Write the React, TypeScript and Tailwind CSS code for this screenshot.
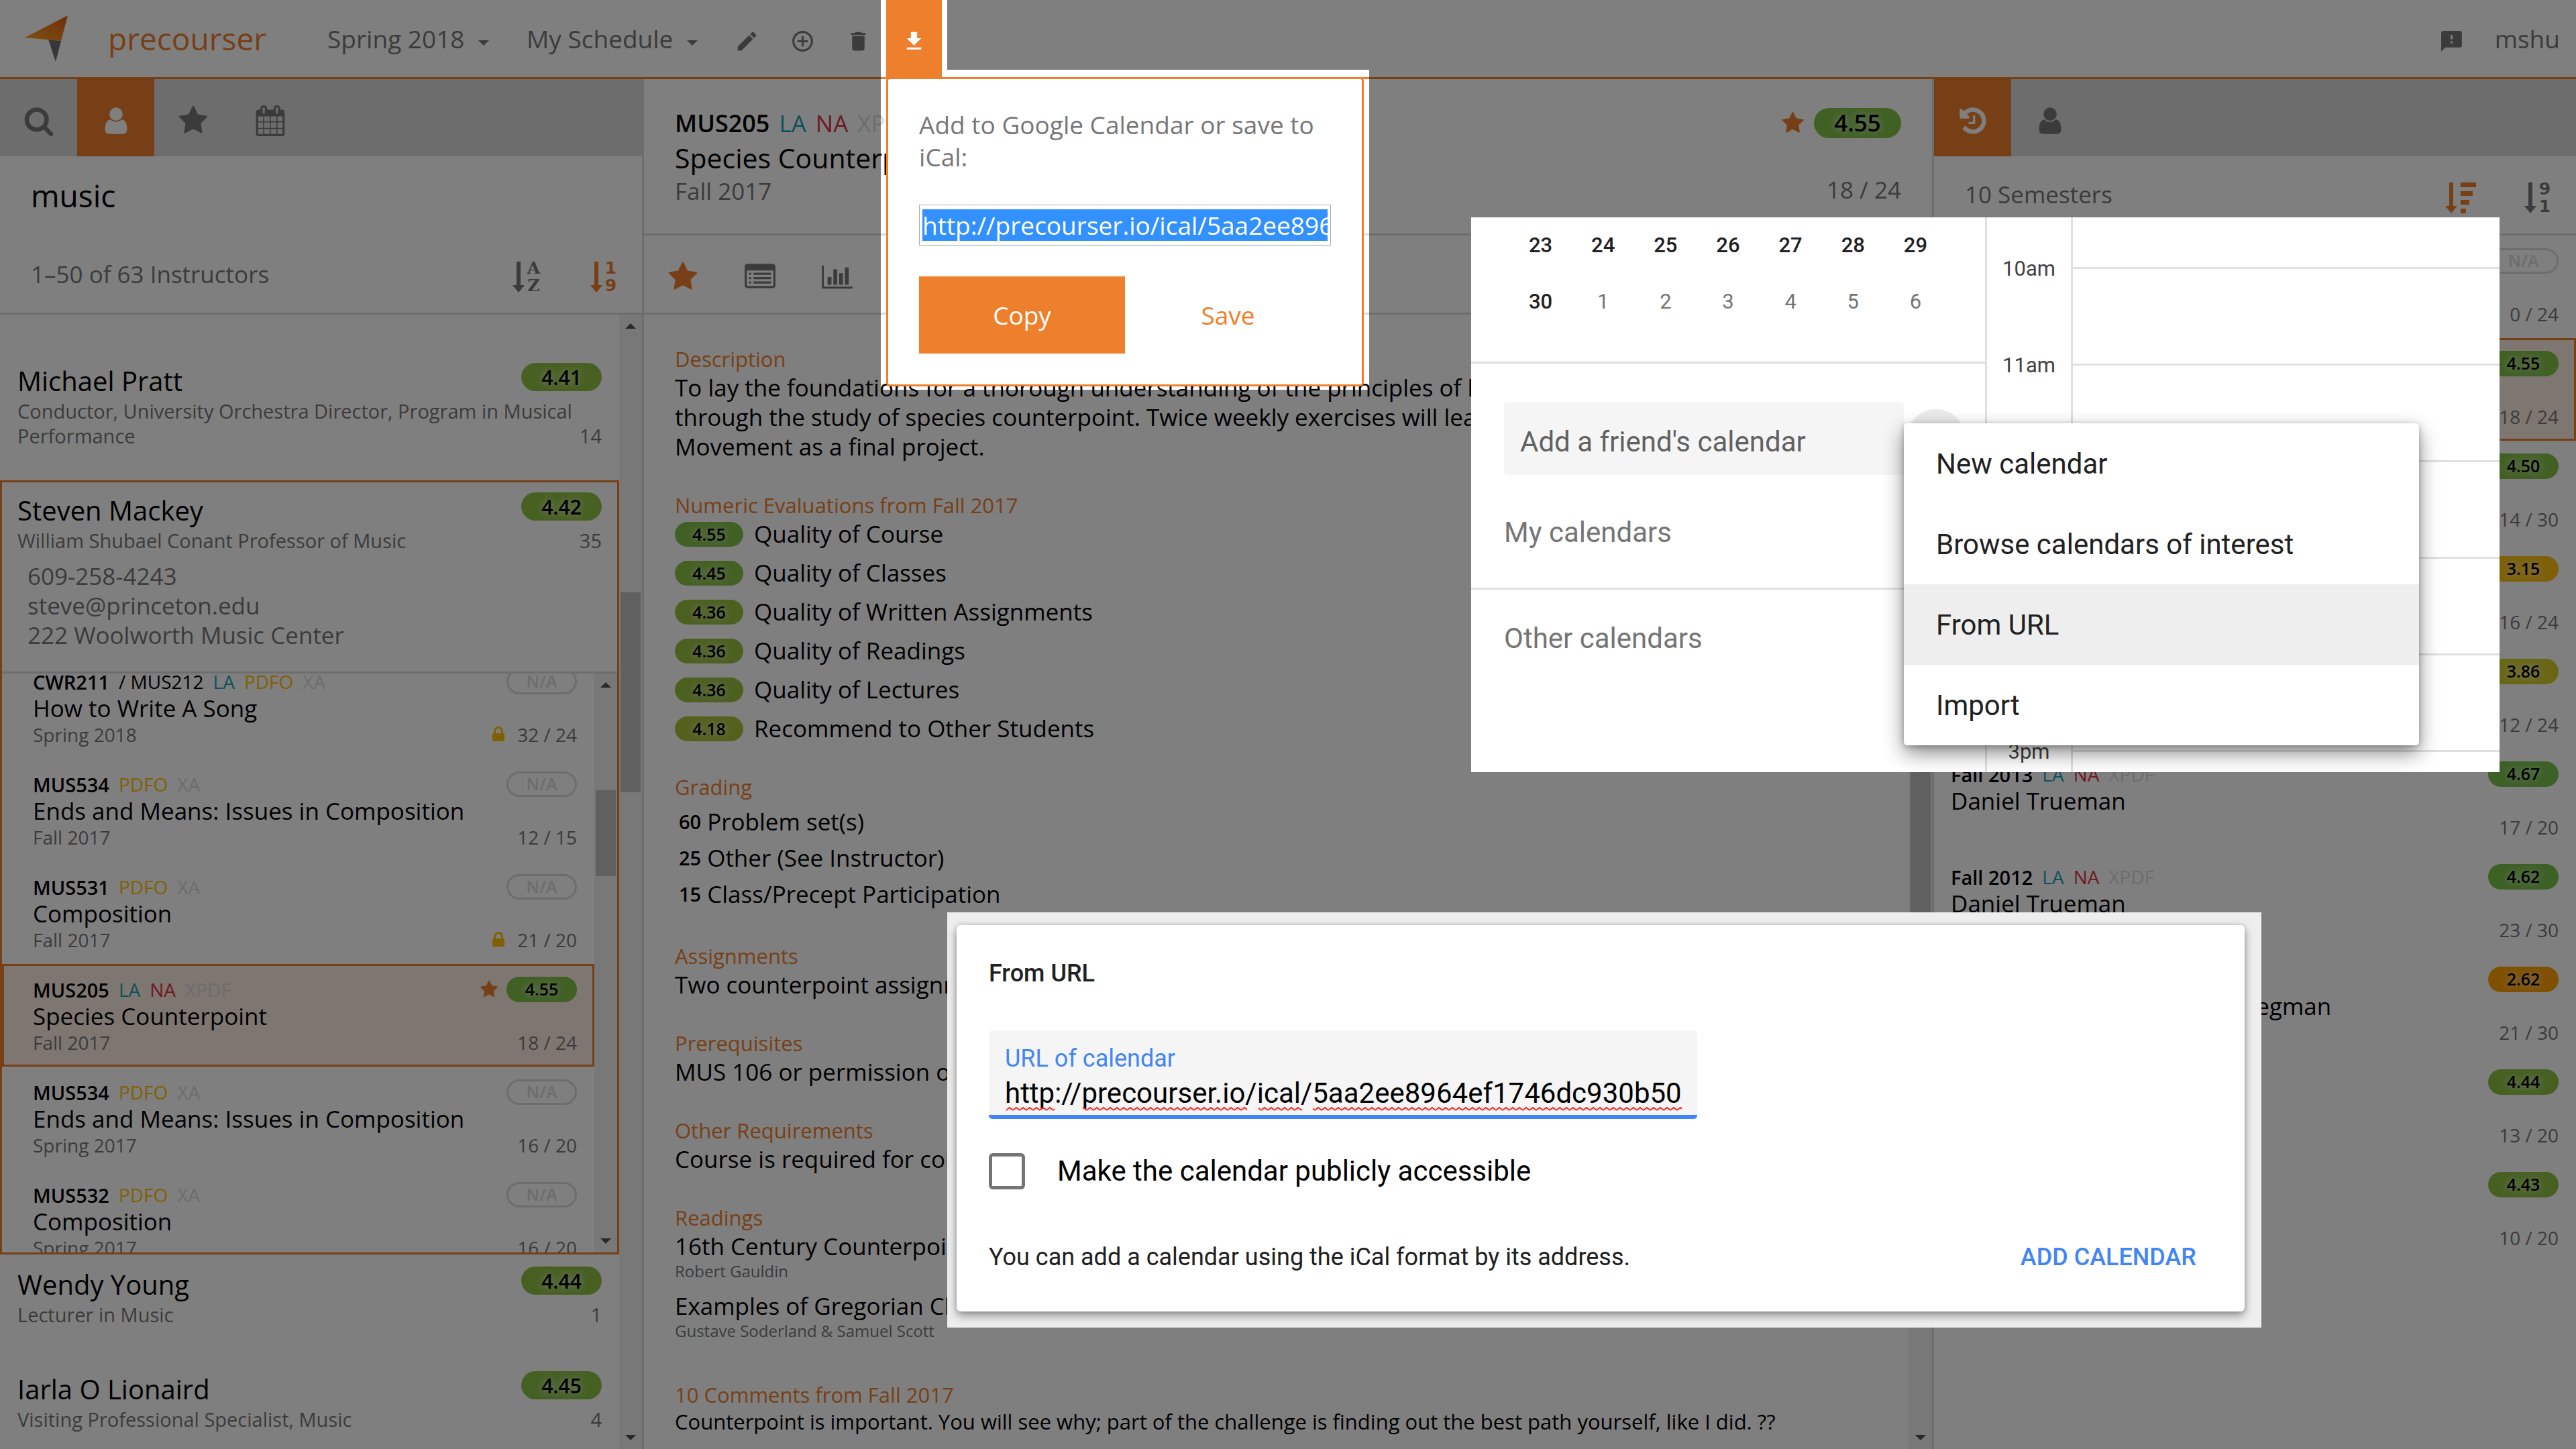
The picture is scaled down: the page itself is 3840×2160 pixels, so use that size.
import type { ReactNode } from "react";
import { MdAddCircleOutline, MdDelete, MdEdit, MdFeedback, MdFileDownload } from "react-icons/md";

const ICONS = {
  search:
    "M1216 832q0-185-131.5-316.5t-316.5-131.5-316.5 131.5-131.5 316.5 131.5 316.5 316.5 131.5 316.5-131.5 131.5-316.5zm512 832q0 52-38 90t-90 38q-54 0-90-38l-343-342q-179 124-399 124-143 0-273.5-55.5t-225-150-150-225-55.5-273.5 55.5-273.5 150-225 225-150 273.5-55.5 273.5 55.5 225 150 150 225 55.5 273.5q0 220-124 399l343 343q37 37 37 90z",
  user: "M1536 1399q0 109-62.5 187t-150.5 78h-854q-88 0-150.5-78t-62.5-187q0-85 8.5-160.5t31.5-152 58.5-131 94-89 134.5-34.5q131 128 313 128t313-128q76 0 134.5 34.5t94 89 58.5 131 31.5 152 8.5 160.5zm-256-887q0 159-112.5 271.5t-271.5 112.5-271.5-112.5-112.5-271.5 112.5-271.5 271.5-112.5 271.5 112.5 112.5 271.5z",
  star: "M1728 647q0 22-26 48l-363 354 86 500q1 7 1 20 0 21-10.5 35.5t-30.5 14.5q-19 0-40-12l-449-236-449 236q-22 12-40 12-21 0-31.5-14.5t-10.5-35.5q0-6 2-20l86-500-364-354q-25-27-25-48 0-37 56-46l502-73 225-455q19-41 49-41t49 41l225 455 502 73q56 9 56 46z",
  calendar:
    "M192 1664h288v-288h-288v288zm352 0h320v-288h-320v288zm-352-352h288v-320h-288v320zm352 0h320v-320h-320v320zm-352-384h288v-288h-288v288zm736 736h320v-288h-320v288zm-384-736h320v-288h-320v288zm768 736h288v-288h-288v288zm-384-352h320v-320h-320v320zm-352-864v-288q0-13-9.5-22.5t-22.5-9.5h-64q-13 0-22.5 9.5t-9.5 22.5v288q0 13 9.5 22.5t22.5 9.5h64q13 0 22.5-9.5t9.5-22.5zm736 864h288v-320h-288v320zm-384-384h320v-288h-320v288zm384 0h288v-288h-288v288zm32-480v-288q0-13-9.5-22.5t-22.5-9.5h-64q-13 0-22.5 9.5t-9.5 22.5v288q0 13 9.5 22.5t22.5 9.5h64q13 0 22.5-9.5t9.5-22.5zm384-64v1280q0 52-38 90t-90 38h-1408q-52 0-90-38t-38-90v-1280q0-52 38-90t90-38h128v-96q0-66 47-113t113-47h64q66 0 113 47t47 113v96h384v-96q0-66 47-113t113-47h64q66 0 113 47t47 113v96h128q52 0 90 38t38 90z",
  history:
    "M1664 896q0 156-61 298t-164 245-245 164-298 61q-172 0-327-72.5t-264-204.5q-7-10-6.5-22.5t8.5-20.5l137-138q10-9 25-9 16 2 23 12 73 95 179 147t225 52q104 0 198.5-40.5t163.5-109.5 109.5-163.5 40.5-198.5-40.5-198.5-109.5-163.5-163.5-109.5-198.5-40.5q-98 0-188 35.5t-160 101.5l137 138q31 30 14 69-17 40-59 40h-448q-26 0-45-19t-19-45v-448q0-42 40-59 39-17 69 14l130 129q107-101 244.5-156.5t284.5-55.5q156 0 298 61t245 164 164 245 61 298zm-640-288v448q0 14-9 23t-23 9h-320q-14 0-23-9t-9-23v-64q0-14 9-23t23-9h224v-352q0-14 9-23t23-9h64q14 0 23 9t9 23z",
  lock: "M640 768h512v-192q0-106-75-181t-181-75-181 75-75 181v192zm832 96v576q0 40-28 68t-68 28h-960q-40 0-68-28t-28-68v-576q0-40 28-68t68-28h32v-192q0-184 132-316t316-132 316 132 132 316v192h32q40 0 68 28t28 68z",
};

function Icon({ name, className }: { name: keyof typeof ICONS; className: string }) {
  return (
    <svg viewBox="0 0 1792 1792" className={className} fill="currentColor" aria-hidden="true">
      <path d={ICONS[name]} />
    </svg>
  );
}

function ListIcon() {
  return (
    <svg viewBox="0 0 1792 1792" className="size-[46px]" fill="currentColor" aria-hidden="true">
      <path
        fillRule="evenodd"
        d="M160 128h1472q66 0 113 47t47 113v1088q0 66-47 113t-113 47h-1472q-66 0-113-47t-47-113v-1088q0-66 47-113t113-47zM160 512q-32 0-32 32v832q0 32 32 32h1472q32 0 32-32v-832q0-32-32-32z"
      />
      <rect x="256" y="640" width="128" height="128" rx="32" />
      <rect x="256" y="896" width="128" height="128" rx="32" />
      <rect x="256" y="1152" width="128" height="128" rx="32" />
      <rect x="512" y="640" width="1024" height="128" rx="32" />
      <rect x="512" y="896" width="1024" height="128" rx="32" />
      <rect x="512" y="1152" width="1024" height="128" rx="32" />
    </svg>
  );
}

function ChartIcon() {
  return (
    <svg viewBox="0 0 2048 1792" className="h-[40px] w-[46px]" fill="currentColor" aria-hidden="true">
      <path d="M640 896v512h-256v-512h256zm384-512v1024h-256v-1024h256zm1024 1152v128h-2048v-1536h128v1408h1920zm-640-896v768h-256v-768h256zm384-384v1152h-256v-1152h256z" />
    </svg>
  );
}

function Logo() {
  return (
    <svg viewBox="0 0 64 70" className="h-[70px] w-16" aria-hidden="true">
      <defs>
        <linearGradient id="logo" x1="0.9" y1="0" x2="0.2" y2="1">
          <stop offset="0" stopColor="#df5f12" />
          <stop offset="1" stopColor="#fa9d22" />
        </linearGradient>
      </defs>
      <path d="M35 36L54 38L46 69Z" fill="#6e6e6e" />
      <path d="M64 0L0 33L54 38Z" fill="url(#logo)" />
    </svg>
  );
}

function Caret() {
  return (
    <svg viewBox="0 0 16 8" className="mt-3 h-2 w-4" fill="currentColor" aria-hidden="true">
      <path d="M0 0h16l-8 8z" />
    </svg>
  );
}

function SortArrow() {
  return (
    <svg viewBox="0 0 18 46" className="h-[46px] w-[18px]" fill="currentColor" aria-hidden="true">
      <path d="M6 0h6v35h6l-9 11l-9-11h6z" />
    </svg>
  );
}

function SortPair({ top, bottom, digits }: { top: string; bottom: string; digits?: boolean }) {
  const face = digits ? "font-['DejaVu_Sans',sans-serif]" : "font-['DejaVu_Serif',serif]";
  return (
    <span className="flex items-center gap-1">
      <SortArrow />
      <span className={`flex flex-col items-center text-[25px] leading-[26px] font-bold ${face}`}>
        <span>{top}</span>
        <span>{bottom}</span>
      </span>
    </span>
  );
}

function SortAmount() {
  return (
    <svg viewBox="0 0 46 46" className="size-[46px]" fill="currentColor" aria-hidden="true">
      <path d="M6 0h6v35h6l-9 11l-9-11h6zM23 0h23v7H23zM23 13h18v7H23zM23 26h13v7H23zM23 39h8v7H23z" />
    </svg>
  );
}

function Cell({ label, active, lit, children }: { label: string; active?: boolean; lit?: boolean; children: ReactNode }) {
  const tone = active ? "bg-[#ee7f2d] text-white" : lit ? "text-[#ee7f2d]" : "text-[#777]";
  return (
    <button type="button" aria-label={label} className={`flex h-[115px] w-[115px] shrink-0 items-center justify-center pt-2 ${tone}`}>
      {children}
    </button>
  );
}

function ScrollBar({ offset, thumb }: { offset: number; thumb: number }) {
  return (
    <div aria-hidden="true" className="flex w-[34px] shrink-0 flex-col items-center bg-[#f1f1f1] py-[13px] text-[#505050]">
      <svg viewBox="0 0 16 8" className="h-2 w-4 shrink-0" fill="currentColor">
        <path d="M8 0l8 8H0z" />
      </svg>
      <div className="flex w-[30px] flex-1 flex-col">
        <div style={{ height: offset }} />
        <div className="bg-[#c1c1c1]" style={{ height: thumb }} />
      </div>
      <svg viewBox="0 0 16 8" className="h-2 w-4 shrink-0" fill="currentColor">
        <path d="M0 0h16l-8 8z" />
      </svg>
    </div>
  );
}

const SCORE_COLORS: Record<string, string> = {
  "4.67": "bg-[#78c04c]",
  "4.62": "bg-[#7ac04a]",
  "4.55": "bg-[#80c048]",
  "4.50": "bg-[#84c048]",
  "4.45": "bg-[#8ac046]",
  "4.44": "bg-[#8ec044]",
  "4.43": "bg-[#8ec044]",
  "4.42": "bg-[#90c044]",
  "4.41": "bg-[#90c044]",
  "4.36": "bg-[#98c040]",
  "4.18": "bg-[#a8c038]",
  "3.86": "bg-[#d2ce2c]",
  "3.15": "bg-[#fcc010]",
  "2.62": "bg-[#ffa000]",
};

const GLOW = "[text-shadow:0_0_12px_white]";

function Score({ value, size }: { value: string; size: string }) {
  if (value === "N/A") {
    return (
      <span className={`flex items-center justify-center rounded-full border-[3px] border-[#dadada] font-semibold text-[#dadada] ${size}`}>
        N/A
      </span>
    );
  }
  return (
    <span className={`flex items-center justify-center rounded-full font-semibold ${GLOW} ${SCORE_COLORS[value]} ${size}`}>
      {value}
    </span>
  );
}

const TAG_COLORS: Record<string, string> = {
  LA: "text-[#17a2b8]",
  NA: "text-[#dc3545]",
  PDFO: "text-[#ffc107]",
  XA: "text-[#dadada]",
  XPDF: "text-[#dadada]",
};

function Tags({ tags }: { tags: string[] }) {
  return (
    <>
      {tags.map((t) => (
        <span key={t} className={TAG_COLORS[t]}>
          {t}
        </span>
      ))}
    </>
  );
}

type Course = {
  code: string;
  alias?: string;
  tags: string[];
  title: string;
  term?: string;
  score: string;
  seats: string;
  locked?: boolean;
  starred?: boolean;
  selected?: boolean;
};

const INSTRUCTOR_COURSES: Course[] = [
  { code: "CWR211", alias: "/ MUS212", tags: ["LA", "PDFO", "XA"], title: "How to Write A Song", term: "Spring 2018", score: "N/A", seats: "32 / 24", locked: true },
  { code: "MUS534", tags: ["PDFO", "XA"], title: "Ends and Means: Issues in Composition", term: "Fall 2017", score: "N/A", seats: "12 / 15" },
  { code: "MUS531", tags: ["PDFO", "XA"], title: "Composition", term: "Fall 2017", score: "N/A", seats: "21 / 20", locked: true },
  { code: "MUS205", tags: ["LA", "NA", "XPDF"], title: "Species Counterpoint", term: "Fall 2017", score: "4.55", seats: "18 / 24", starred: true, selected: true },
  { code: "MUS534", tags: ["PDFO", "XA"], title: "Ends and Means: Issues in Composition", term: "Spring 2017", score: "N/A", seats: "16 / 20" },
  { code: "MUS532", tags: ["PDFO", "XA"], title: "Composition", term: "Spring 2017", score: "N/A", seats: "16 / 20" },
];

const XT = ["LA", "NA", "XPDF"];
const SEMESTERS: Course[] = [
  { code: "Spring 2018", tags: XT, title: "Dmitri Tymoczko", score: "N/A", seats: "0 / 24" },
  { code: "Fall 2017", tags: XT, title: "Steven Mackey", score: "4.55", seats: "18 / 24", selected: true },
  { code: "Fall 2016", tags: XT, title: "Dmitri Tymoczko", score: "4.50", seats: "14 / 30" },
  { code: "Fall 2015", tags: XT, title: "Daniel Trueman", score: "3.15", seats: "16 / 24" },
  { code: "Fall 2014", tags: XT, title: "Daniel Trueman", score: "3.86", seats: "12 / 24" },
  { code: "Fall 2013", tags: XT, title: "Daniel Trueman", score: "4.67", seats: "17 / 20" },
  { code: "Fall 2012", tags: XT, title: "Daniel Trueman", score: "4.62", seats: "23 / 30" },
  { code: "Fall 2011", tags: XT, title: "Daniel Trueman, Andrew Wiegman", score: "2.62", seats: "21 / 30" },
  { code: "Fall 2010", tags: XT, title: "Paul Lansky", score: "4.44", seats: "13 / 20" },
  { code: "Fall 2009", tags: XT, title: "Paul Lansky", score: "4.43", seats: "10 / 20" },
];

function CourseRow({ course, wide }: { course: Course; wide?: boolean }) {
  const frame = course.selected ? "border-[#ee7f2d] bg-[#fcece2]" : "border-transparent";
  return (
    <li className={`flex h-[153px] shrink-0 justify-between border-[3px] pt-4 pr-[23px] pb-[14px] ${wide ? "pl-[22px]" : "pl-[43px]"} ${frame}`}>
      <div className="min-w-0 whitespace-nowrap">
        <div className="flex gap-[14px] text-[28px] leading-[39px]">
          <span className="text-[29px] font-semibold">{course.code}</span>
          {course.alias && <span>{course.alias}</span>}
          <Tags tags={course.tags} />
        </div>
        <div className="text-[35px] leading-[40px]">{course.title}</div>
        {course.term && <div className="text-[28px] leading-[38px] text-[#777]">{course.term}</div>}
      </div>
      <div className="flex flex-col items-end justify-between">
        <div className="flex items-center gap-3">
          {course.starred && <Icon name="star" className="size-7 text-[#ee7f2d]" />}
          <Score value={course.score} size="h-[38px] w-[105px] text-[25px]" />
        </div>
        <div className="flex items-center gap-[14px] text-[28px] leading-[38px] text-[#777]">
          {course.locked && <Icon name="lock" className="size-7 text-[#ffc107]" />}
          {course.seats}
        </div>
      </div>
    </li>
  );
}

function InstructorHead({ name, role, score, count }: { name: string; role: string; score: string; count: number }) {
  return (
    <div className="px-[23px] pt-[13px]">
      <div className="flex justify-between pt-[2px]">
        <div className="text-[40px] leading-[53px]">{name}</div>
        <Score value={score} size="h-[42px] w-[120px] text-[30px]" />
      </div>
      <div className="flex items-end justify-between text-[29px] leading-[37px] text-[#777]">
        <div className="min-w-0">{role}</div>
        <div>{count}</div>
      </div>
    </div>
  );
}

function InstructorItem(props: { name: string; role: string; score: string; count: number }) {
  return (
    <li className="shrink-0 border-[3px] border-transparent pb-[45px]">
      <InstructorHead {...props} />
    </li>
  );
}

function LeftPane() {
  return (
    <aside className="flex min-h-0 min-w-0 flex-col border-r-[3px] border-[#dadada]">
      <nav className="flex bg-[#dadada]">
        <Cell label="Search courses">
          <Icon name="search" className="size-[46px]" />
        </Cell>
        <Cell label="Instructors" active>
          <Icon name="user" className="size-[46px]" />
        </Cell>
        <Cell label="Starred">
          <Icon name="star" className="size-[46px]" />
        </Cell>
        <Cell label="Schedule">
          <Icon name="calendar" className="size-[46px]" />
        </Cell>
      </nav>
      <input aria-label="Search instructors" defaultValue="music" className="h-[115px] w-full px-[46px] text-[46px] outline-none" />
      <div className="flex h-[121px] shrink-0 items-center justify-between border-b-[3px] border-[#dadada] pt-1 pl-[46px] text-[35px] text-[#777]">
        <span>1–50 of 63 Instructors</span>
        <div className="flex">
          <Cell label="Sort by name">
            <SortPair top="A" bottom="Z" />
          </Cell>
          <Cell label="Sort by rating" lit>
            <SortPair top="1" bottom="9" digits />
          </Cell>
        </div>
      </div>
      <div className="flex min-h-0 flex-1">
        <ul className="flex min-w-0 flex-1 flex-col overflow-hidden pt-[54px]">
          <InstructorItem
            name="Michael Pratt"
            role="Conductor, University Orchestra Director, Program in Musical Performance"
            score="4.41"
            count={14}
          />
          <li className="shrink-0 border-[3px] border-[#ee7f2d]">
            <InstructorHead name="Steven Mackey" role="William Shubael Conant Professor of Music" score="4.42" count={35} />
            <address className="border-b-[3px] border-[#dadada] pt-[13px] pb-8 pl-[38px] text-[35px] leading-[44px] text-[#777] not-italic">
              609-258-4243
              <br />
              steve@princeton.edu
              <br />
              222 Woolworth Music Center
            </address>
            <div className="flex h-[863px] overflow-hidden">
              <ul className="-mt-[26px] min-w-0 flex-1">
                {INSTRUCTOR_COURSES.map((c, i) => (
                  <CourseRow key={i} course={c} />
                ))}
              </ul>
              <ScrollBar offset={153} thumb={128} />
            </div>
          </li>
          <InstructorItem name="Wendy Young" role="Lecturer in Music" score="4.44" count={1} />
          <InstructorItem name="Iarla O Lionaird" role="Visiting Professional Specialist, Music" score="4.45" count={4} />
        </ul>
        <ScrollBar offset={393} thumb={298} />
      </div>
    </aside>
  );
}

const EVALUATIONS: [string, string][] = [
  ["4.55", "Quality of Course"],
  ["4.45", "Quality of Classes"],
  ["4.36", "Quality of Written Assignments"],
  ["4.36", "Quality of Readings"],
  ["4.36", "Quality of Lectures"],
  ["4.18", "Recommend to Other Students"],
];

const GRADING: [number, string][] = [
  [60, "Problem set(s)"],
  [25, "Other (See Instructor)"],
  [15, "Class/Precept Participation"],
];

const READINGS: [string, string][] = [
  ["16th Century Counterpoint", "Robert Gauldin"],
  ["Examples of Gregorian Chant", "Gustave Soderland & Samuel Scott"],
];

function Section({ title, children }: { title: string; children: ReactNode }) {
  return (
    <section>
      <h2 className="text-[31px] leading-[42px] text-[#ee7f2d]">{title}</h2>
      {children}
    </section>
  );
}

function MiddlePane() {
  return (
    <main className="flex min-h-0 min-w-0 flex-col">
      <header className="flex h-[233px] shrink-0 items-center justify-between border-b-[3px] border-[#dadada] px-[46px]">
        <div>
          <div className="flex gap-[14px] text-[35px] leading-[49px]">
            <span className="text-[36px] font-semibold">MUS205</span>
            <Tags tags={XT} />
          </div>
          <h1 className="text-[41px] leading-[54px]">Species Counterpoint</h1>
          <div className="text-[35px] leading-[46px] text-[#777]">Fall 2017</div>
        </div>
        <div className="flex flex-col items-end gap-[54px]">
          <div className="flex items-center gap-[14px]">
            <Icon name="star" className="size-[35px] text-[#ee7f2d]" />
            <Score value="4.55" size="h-[45px] w-[130px] text-[35px]" />
          </div>
          <div className="text-[35px] leading-[46px] text-[#777]">18 / 24</div>
        </div>
      </header>
      <nav className="flex border-b-[3px] border-[#dadada]">
        <Cell label="Star this course" lit>
          <Icon name="star" className="size-[46px]" />
        </Cell>
        <Cell label="Details">
          <ListIcon />
        </Cell>
        <Cell label="Statistics">
          <ChartIcon />
        </Cell>
      </nav>
      <div className="flex min-h-0 flex-1">
        <div className="flex min-w-0 flex-1 flex-col gap-11 overflow-hidden pt-[45px] pl-[46px] text-[35px] leading-[44px] whitespace-nowrap">
          <Section title="Description">
            <p>
              To lay the foundations for a thorough understanding of the principles of linear and vertical construction
              <br />
              through the study of species counterpoint. Twice weekly exercises will lead to the writing of a Mass
              <br />
              Movement as a final project.
            </p>
          </Section>
          <Section title="Numeric Evaluations from Fall 2017">
            <ul className="flex flex-col gap-[14px]">
              {EVALUATIONS.map(([score, label]) => (
                <li key={label} className="flex items-center gap-4">
                  <Score value={score} size="h-[37px] w-[102px] text-[25px]" />
                  {label}
                </li>
              ))}
            </ul>
          </Section>
          <Section title="Grading">
            <ul className="pt-1 pl-[6px]">
              {GRADING.map(([pct, label]) => (
                <li key={label} className="flex items-center gap-[9px] leading-[54px]">
                  <span className="text-[29px] font-semibold">{pct}</span>
                  {label}
                </li>
              ))}
            </ul>
          </Section>
          <Section title="Assignments">
            <p>Two counterpoint assignments weekly</p>
          </Section>
          <Section title="Prerequisites">
            <p>MUS 106 or permission of instructor</p>
          </Section>
          <Section title="Other Requirements">
            <p>Course is required for concentrators</p>
          </Section>
          <Section title="Readings">
            {READINGS.map(([title, author]) => (
              <div key={title} className="pb-[15px]">
                <p>{title}</p>
                <p className="text-[24px] leading-[30px] text-[#777]">{author}</p>
              </div>
            ))}
          </Section>
          <Section title="10 Comments from Fall 2017">
            <p className="text-[31px] leading-[38px]">
              Counterpoint is important. You will see why; part of the challenge is finding out the best path yourself, like I did. ??
            </p>
          </Section>
        </div>
        <ScrollBar offset={300} thumb={900} />
      </div>
    </main>
  );
}

function RightPane() {
  return (
    <aside className="flex min-h-0 min-w-0 flex-col border-l-[3px] border-[#dadada]">
      <nav className="flex bg-[#dadada]">
        <Cell label="History" active>
          <Icon name="history" className="size-[46px]" />
        </Cell>
        <Cell label="Instructors">
          <Icon name="user" className="size-[46px]" />
        </Cell>
      </nav>
      <div className="flex h-[118px] shrink-0 items-center justify-between border-b-[3px] border-[#dadada] pl-[46px] text-[35px] text-[#777]">
        <span>10 Semesters</span>
        <div className="flex">
          <Cell label="Sort by term" lit>
            <SortAmount />
          </Cell>
          <Cell label="Sort by rating">
            <SortPair top="9" bottom="1" digits />
          </Cell>
        </div>
      </div>
      <ul className="min-h-0 flex-1 overflow-hidden">
        {SEMESTERS.map((c) => (
          <CourseRow key={c.code} course={c} wide />
        ))}
      </ul>
    </aside>
  );
}

function ExportPopup() {
  return (
    <div className="absolute top-[115px] left-0 z-20 w-[712px] rounded-[5px] border-[3px] border-[#ee7f2d] bg-white px-[46px] pt-11 pb-[46px] text-[37px] leading-[48px]">
      <label htmlFor="ical" className="block text-[#777]">
        Add to Google Calendar or save to iCal:
      </label>
      <input
        id="ical"
        readOnly
        defaultValue="http://precourser.io/ical/5aa2ee8964ef1746dc930b50"
        className="mt-[47px] block h-[61px] w-full border border-[#a9a9a9] bg-[#3390ff] bg-clip-content px-1 py-[6px] text-white outline-none"
      />
      <div className="mt-[46px] flex">
        <button type="button" className="h-[115px] flex-1 bg-[#ee7f2d] text-white">
          Copy
        </button>
        <button type="button" className="h-[115px] flex-1 text-[#ee7f2d]">
          Save
        </button>
      </div>
    </div>
  );
}

function TopBar() {
  return (
    <header className="flex h-[118px] shrink-0 items-center border-b-[3px] border-[#ee7f2d] pr-6 pl-[37px] text-[37px] text-[#777]">
      <Logo />
      <a href="#" className="ml-[60px] text-[46px] text-[#ee7f2d]">
        precourser
      </a>
      <label className="ml-[91px] flex items-center gap-5">
        <select aria-label="Term" className="appearance-none">
          <option>Spring 2018</option>
        </select>
        <Caret />
      </label>
      <label className="ml-14 flex items-center gap-5">
        <select aria-label="Schedule" className="appearance-none">
          <option>My Schedule</option>
        </select>
        <Caret />
      </label>
      <div className="ml-8 flex h-[115px] pt-2">
        <button type="button" aria-label="Rename schedule" className="flex w-[83px] items-center justify-center">
          <MdEdit />
        </button>
        <button type="button" aria-label="New schedule" className="flex w-[83px] items-center justify-center">
          <MdAddCircleOutline />
        </button>
        <button type="button" aria-label="Delete schedule" className="flex w-[83px] items-center justify-center">
          <MdDelete />
        </button>
      </div>
      <div className="relative">
        <button type="button" aria-label="Export schedule" className="flex h-[115px] w-[83px] items-center justify-center bg-[#ee7f2d] pt-2 text-white">
          <MdFileDownload />
        </button>
        <ExportPopup />
      </div>
      <button type="button" aria-label="Send feedback" className="mt-2 ml-auto">
        <MdFeedback />
      </button>
      <a href="#" className="ml-[46px]">
        mshu
      </a>
    </header>
  );
}

const DAYS = ["23", "24", "25", "26", "27", "28", "29", "30", "1", "2", "3", "4", "5", "6"];
const HOURS = ["10am", "11am", "12pm", "1pm", "2pm", "3pm"];
const MENU = ["New calendar", "Browse calendars of interest", "From URL", "Import"];

function CalendarPanel() {
  return (
    <div className="absolute top-[324px] left-[2193px] z-20 flex h-[827px] w-[1533px] overflow-hidden bg-white font-[Roboto,sans-serif]">
      <div className="flex w-[766px] flex-col text-[42px] leading-[50px] text-[#757575]">
        <div className="grid h-[215px] grid-cols-7 content-start px-[57px] text-center text-[31px] leading-[84px] text-[#212121]">
          {DAYS.map((d, i) => (
            <span key={d} className={i > 7 ? "text-[#757575]" : "font-medium"}>
              {d}
            </span>
          ))}
        </div>
        <div className="h-[340px] border-t-[3px] border-b-[3px] border-[#e0e0e0] pt-[58px] pl-[49px]">
          <div className="flex items-center">
            <input
              aria-label="Add a friend's calendar"
              placeholder="Add a friend's calendar"
              className="h-[108px] w-[596px] rounded-[5px] bg-[#f5f5f5] px-6 pt-2 placeholder:text-[#616161]"
            />
            <span className="ml-1 size-[88px] rounded-full bg-[#ebebeb]" />
          </div>
          <h3 className="mt-[61px]">My calendars</h3>
        </div>
        <h3 className="pt-[48px] pl-[49px]">Other calendars</h3>
      </div>
      <div className="w-[131px] border-r-[3px] border-l-[3px] border-[#e0e0e0] pt-[5px] text-center text-[31px] leading-[144px] text-[#424242]">
        {HOURS.map((h) => (
          <div key={h}>{h}</div>
        ))}
      </div>
      <div className="flex-1">
        <div className="h-[77px] border-b-[3px] border-[#e0e0e0]" />
        {HOURS.slice(1).map((h) => (
          <div key={h} className="h-36 border-b-[3px] border-[#e0e0e0]" />
        ))}
      </div>
      <ul className="absolute top-[307px] left-[645px] w-[768px] overflow-visible rounded-[5px] bg-white text-[42px] text-[#212121] shadow-[0_12px_30px_rgba(0,0,0,0.45),0_2px_8px_rgba(0,0,0,0.25)]">
        {MENU.map((m) => (
          <li key={m}>
            <button type="button" className={`h-[120px] w-full px-12 text-left ${m === "From URL" ? "bg-[#eeeeee]" : ""}`}>
              {m}
            </button>
          </li>
        ))}
      </ul>
    </div>
  );
}

const SQUIGGLES: [number, number][] = [
  [0, 72],
  [114, 245],
  [376, 65],
  [457, 550],
];

function FromUrlDialog() {
  return (
    <div className="absolute top-[1360px] left-[1412px] z-20 w-[1959px] bg-[#eeeeee] px-[14px] pt-[19px] pb-6 font-[Roboto,sans-serif]">
      <form className="mr-[11px] rounded-[6px] bg-white px-12 pt-12 pb-[57px] shadow-[0_6px_14px_rgba(0,0,0,0.4),0_0_6px_rgba(0,0,0,0.15)]">
        <h2 className="text-[36px] leading-[48px] font-medium text-[#212121]">From URL</h2>
        <div className="relative mt-[61px] h-[132px] w-[1056px] rounded-[5px] border-b-[6px] border-[#4285f4] bg-[#f5f5f5] px-6 pt-[21px]">
          <label htmlFor="url" className="block text-[36px] leading-[42px] text-[#4285f4]">
            URL of calendar
          </label>
          <input
            id="url"
            defaultValue="http://precourser.io/ical/5aa2ee8964ef1746dc930b50"
            className="mt-[5px] block h-[50px] w-full bg-transparent text-[42px] outline-none"
          />
          <svg className="absolute bottom-[5px] left-[26px] h-2 w-[1008px]" aria-hidden="true">
            <defs>
              <pattern id="wave" width="10" height="8" patternUnits="userSpaceOnUse">
                <path d="M0 6L5 2L10 6" fill="none" stroke="#f22" strokeWidth="2" />
              </pattern>
            </defs>
            {SQUIGGLES.map(([x, w]) => (
              <rect key={x} x={x} width={w} height="8" fill="url(#wave)" />
            ))}
          </svg>
        </div>
        <label className="mt-[51px] flex items-center gap-12 text-[42px] leading-[54px]">
          <input type="checkbox" className="size-[54px] appearance-none rounded-[6px] border-[5px] border-[#757575]" />
          Make the calendar publicly accessible
        </label>
        <div className="mt-[77px] flex items-center justify-between pr-6 text-[36px] leading-[48px]">
          <p className="text-[#212121]">You can add a calendar using the iCal format by its address.</p>
          <button type="button" className="font-medium text-[#4285f4]">
            ADD CALENDAR
          </button>
        </div>
      </form>
    </div>
  );
}

export default function App() {
  return (
    <div className="relative flex h-screen flex-col overflow-hidden bg-white font-['Open_Sans',sans-serif] text-black">
      <TopBar />
      <div className="grid min-h-0 flex-1 grid-cols-[1fr_2fr_1fr] grid-rows-1">
        <LeftPane />
        <MiddlePane />
        <RightPane />
      </div>
      <div className="pointer-events-none absolute inset-0 z-10 bg-black/50 [clip-path:polygon(evenodd,0_0,100%_0,100%_100%,0_100%,0_0,1313px_0,1412px_0,1412px_104px,2041px_104px,2041px_581px,1313px_581px,1313px_0,0_0)]" />
      <CalendarPanel />
      <FromUrlDialog />
    </div>
  );
}
